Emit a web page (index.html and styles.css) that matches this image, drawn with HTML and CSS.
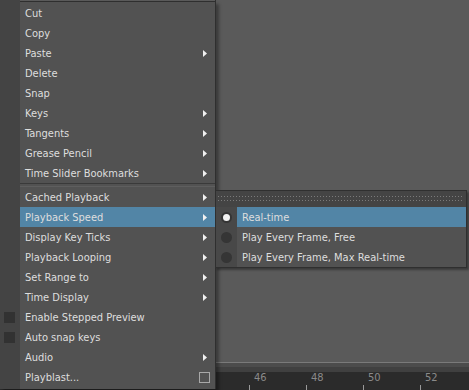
FILE: index.html
```html
<!DOCTYPE html>
<html>
<head>
<meta charset="utf-8">
<link rel="stylesheet" href="styles.css">
</head>
<body>
<div class="screen">
  <div class="viewport"></div>
  <div class="timeline-edge"></div>
  <div class="timeline">
    <div class="frame"><span class="num">46</span></div>
    <div class="frame"><span class="num">48</span></div>
    <div class="frame"><span class="num">50</span></div>
    <div class="frame"><span class="num">52</span></div>
  </div>

  <div class="menu">
    <div class="item"><span class="mark"></span><span class="main"><span class="label">Cut</span></span></div>
    <div class="item"><span class="mark"></span><span class="main"><span class="label">Copy</span></span></div>
    <div class="item"><span class="mark"></span><span class="main"><span class="label">Paste</span><svg class="arrow" width="4" height="7" viewBox="0 0 4 7"><polygon points="0,0 4,3.5 0,7"/></svg></span></div>
    <div class="item"><span class="mark"></span><span class="main"><span class="label">Delete</span></span></div>
    <div class="item"><span class="mark"></span><span class="main"><span class="label">Snap</span></span></div>
    <div class="item"><span class="mark"></span><span class="main"><span class="label">Keys</span><svg class="arrow" width="4" height="7" viewBox="0 0 4 7"><polygon points="0,0 4,3.5 0,7"/></svg></span></div>
    <div class="item"><span class="mark"></span><span class="main"><span class="label">Tangents</span><svg class="arrow" width="4" height="7" viewBox="0 0 4 7"><polygon points="0,0 4,3.5 0,7"/></svg></span></div>
    <div class="item"><span class="mark"></span><span class="main"><span class="label">Grease Pencil</span><svg class="arrow" width="4" height="7" viewBox="0 0 4 7"><polygon points="0,0 4,3.5 0,7"/></svg></span></div>
    <div class="item"><span class="mark"></span><span class="main"><span class="label">Time Slider Bookmarks</span><svg class="arrow" width="4" height="7" viewBox="0 0 4 7"><polygon points="0,0 4,3.5 0,7"/></svg></span></div>
    <div class="sep"><span class="mark"></span><span class="line"></span></div>
    <div class="item"><span class="mark"></span><span class="main"><span class="label">Cached Playback</span><svg class="arrow" width="4" height="7" viewBox="0 0 4 7"><polygon points="0,0 4,3.5 0,7"/></svg></span></div>
    <div class="item active"><span class="mark"></span><span class="main"><span class="label">Playback Speed</span><svg class="arrow" width="4" height="7" viewBox="0 0 4 7"><polygon points="0,0 4,3.5 0,7"/></svg></span></div>
    <div class="item"><span class="mark"></span><span class="main"><span class="label">Display Key Ticks</span><svg class="arrow" width="4" height="7" viewBox="0 0 4 7"><polygon points="0,0 4,3.5 0,7"/></svg></span></div>
    <div class="item"><span class="mark"></span><span class="main"><span class="label">Playback Looping</span><svg class="arrow" width="4" height="7" viewBox="0 0 4 7"><polygon points="0,0 4,3.5 0,7"/></svg></span></div>
    <div class="item"><span class="mark"></span><span class="main"><span class="label">Set Range to</span><svg class="arrow" width="4" height="7" viewBox="0 0 4 7"><polygon points="0,0 4,3.5 0,7"/></svg></span></div>
    <div class="item"><span class="mark"></span><span class="main"><span class="label">Time Display</span><svg class="arrow" width="4" height="7" viewBox="0 0 4 7"><polygon points="0,0 4,3.5 0,7"/></svg></span></div>
    <div class="item"><span class="mark"><span class="check"></span></span><span class="main"><span class="label">Enable Stepped Preview</span></span></div>
    <div class="item"><span class="mark"><span class="check"></span></span><span class="main"><span class="label">Auto snap keys</span></span></div>
    <div class="item"><span class="mark"></span><span class="main"><span class="label">Audio</span><svg class="arrow" width="4" height="7" viewBox="0 0 4 7"><polygon points="0,0 4,3.5 0,7"/></svg></span></div>
    <div class="item"><span class="mark"></span><span class="main"><span class="label">Playblast...</span><span class="optbox"></span></span></div>
  </div>

  <div class="submenu">
    <div class="tearoff"><span class="dots"></span><span class="dots"></span></div>
    <div class="sitem active"><span class="smark"><span class="radio on"></span></span><span class="smain">Real-time</span></div>
    <div class="sitem"><span class="smark"><span class="radio"></span></span><span class="smain">Play Every Frame, Free</span></div>
    <div class="sitem"><span class="smark"><span class="radio"></span></span><span class="smain">Play Every Frame, Max Real-time</span></div>
  </div>
</div>
</body>
</html>
```

FILE: styles.css
```css
* { box-sizing: border-box; }
html, body {
  margin: 0;
  padding: 0;
  background: #5a5a5a;
}
body {
  font-family: "DejaVu Sans Condensed", "DejaVu Sans", sans-serif;
  font-stretch: condensed;
  font-size: 11px;
  color: #dedede;
}
.screen {
  position: relative;
  width: 469px;
  height: 390px;
  overflow: hidden;
  display: flex;
  flex-direction: column;
}
.viewport {
  flex: 1;
  background: #5a5a5a;
}
.timeline-edge {
  height: 10px;
  border-top: 1px solid #7a7a7a;
  background: linear-gradient(#4c4c4c 0 4px, #404040 4px);
}
.timeline {
  height: 18px;
  background: #2b2b2b;
  display: flex;
  padding-left: 248px;
}
.frame {
  width: 57px;
  flex: none;
  position: relative;
  border-left: 1px solid transparent;
  background: linear-gradient(#9a9a9a, #9a9a9a) 0 13px / 1px 5px no-repeat;
}
.num {
  display: block;
  padding-left: 5px;
  line-height: 12px;
  color: #8a8a8a;
}

/* main popup menu */
.menu {
  position: absolute;
  left: 0;
  top: 0;
  width: 216px;
  padding-top: 3px;
  padding-bottom: 2px;
  background:
    linear-gradient(#2f2f2f, #2f2f2f) 20px 1px / 196px 1px no-repeat,
    linear-gradient(#5a5a5a, #5a5a5a) 20px 0 / 196px 1px no-repeat,
    linear-gradient(to right, #444444 20px, #525252 20px);
  box-shadow: 3px 4px 3px rgba(0, 0, 0, 0.35);
  border-right: 1px solid #2f2f2f;
}
.item {
  display: flex;
  height: 20px;
}
.mark {
  width: 20px;
  flex: none;
  display: flex;
  align-items: center;
  padding-left: 4px;
}
.check {
  width: 11px;
  height: 11px;
  background: #323232;
}
.main {
  flex: 1;
  display: flex;
  align-items: center;
  justify-content: space-between;
  padding-left: 5px;
  padding-right: 8px;
}
.item.active .main {
  background: #5285a6;
}
.arrow {
  fill: #f0f0f0;
  display: block;
}
.optbox {
  width: 11px;
  height: 11px;
  border: 1px solid #a8a8a8;
  margin-right: -3px;
}
.sep {
  display: flex;
  height: 4px;
}
.sep .line {
  flex: 1;
  border-top: 1px solid #3a3a3a;
  border-bottom: 1px solid #5e5e5e;
  margin-top: 0;
}

/* submenu */
.submenu {
  position: absolute;
  left: 215px;
  top: 190px;
  width: 252px;
  border: 1px solid #2f2f2f;
  background: linear-gradient(to right, #484848 21px, #525252 21px);
  box-shadow: 2px 2px 2px rgba(0, 0, 0, 0.35);
}
.tearoff {
  height: 16px;
  background: #444444;
  display: flex;
  flex-direction: column;
  padding-top: 5px;
  gap: 3px;
}
.dots {
  height: 1px;
  margin: 0 2px;
  background: repeating-linear-gradient(to right, #7a7a7a 0 1px, transparent 1px 3px);
}
.sitem {
  display: flex;
  height: 20px;
}
.smark {
  width: 21px;
  flex: none;
  display: flex;
  align-items: center;
  justify-content: center;
}
.radio {
  width: 11px;
  height: 11px;
  border-radius: 50%;
  background: #353535;
  display: flex;
  align-items: center;
  justify-content: center;
}
.radio.on::after {
  content: "";
  width: 7px;
  height: 7px;
  border-radius: 50%;
  background: #f2f2f2;
}
.smain {
  flex: 1;
  display: flex;
  align-items: center;
  padding-left: 5px;
}
.sitem.active .smain {
  background: #5285a6;
}
```
